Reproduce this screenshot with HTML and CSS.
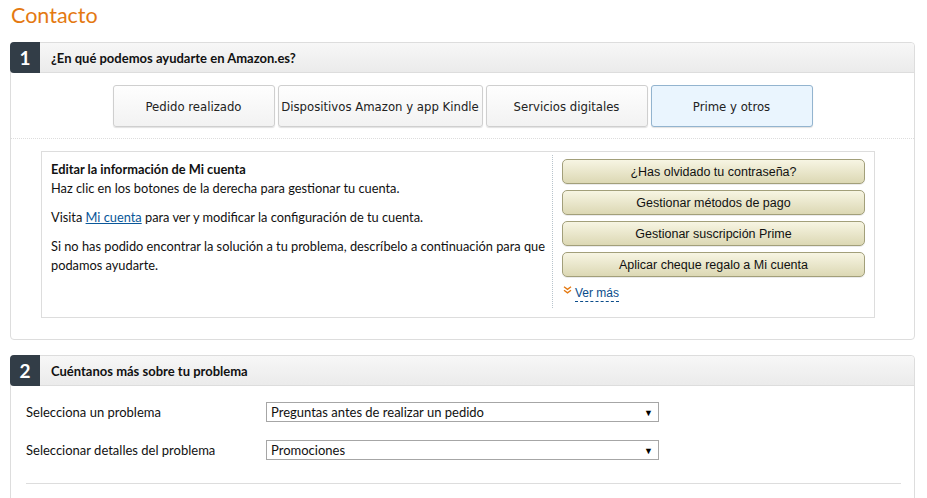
FILE: index.html
```html
<!DOCTYPE html>
<html>
  <head>
    <meta charset="utf-8">
    <title>Contacto</title>
    <link rel="stylesheet" href="styles.css">
  </head>
  <body>
    <h1 class="page-title">Contacto</h1>

    <section class="step">
        <div class="step-head">
            <span class="step-num">1</span>
            <h2>¿En qué podemos ayudarte en Amazon.es?</h2>
        </div>
        <div class="tabs">
            <button class="tab">Pedido realizado</button>
            <button class="tab wide">Dispositivos Amazon y app Kindle</button>
            <button class="tab">Servicios digitales</button>
            <button class="tab selected">Prime y otros</button>
        </div>
        <div class="panel">
            <div class="panel-info">
                <p><b>Editar la información de Mi cuenta</b><br>
                Haz clic en los botones de la derecha para gestionar tu cuenta.</p>
                <p>Visita <a href="#">Mi cuenta</a> para ver y modificar la configuración de tu cuenta.</p>
                <p>Si no has podido encontrar la solución a tu problema, descríbelo a continuación para que podamos ayudarte.</p>
            </div>
            <div class="panel-actions">
                <button class="olive">¿Has olvidado tu contraseña?</button>
                <button class="olive">Gestionar métodos de pago</button>
                <button class="olive">Gestionar suscripción Prime</button>
                <button class="olive">Aplicar cheque regalo a Mi cuenta</button>
                <div class="more">
                    <svg width="9" height="8" viewBox="0 0 9 8">
                        <polyline points="1,0.8 4.5,3.3 8,0.8" fill="none" stroke="#e47911" stroke-width="1.4"/>
                        <polyline points="1,4.3 4.5,6.8 8,4.3" fill="none" stroke="#e47911" stroke-width="1.4"/>
                    </svg>
                    <a href="#">Ver más</a>
                </div>
            </div>
        </div>
    </section>

    <section class="step">
        <div class="step-head">
            <span class="step-num">2</span>
            <h2>Cuéntanos más sobre tu problema</h2>
        </div>
        <div class="form">
            <div class="form-row">
                <label>Selecciona un problema</label>
                <div class="select"><span>Preguntas antes de realizar un pedido</span><span class="arrow">▼</span></div>
            </div>
            <div class="form-row">
                <label>Seleccionar detalles del problema</label>
                <div class="select"><span>Promociones</span><span class="arrow">▼</span></div>
            </div>
            <hr>
        </div>
    </section>
  </body>
</html>
```

FILE: styles.css
```css
body {
    margin: 0;
    padding: 0 12px 0 10px;
    font-family: Lato, "Liberation Sans", sans-serif;
    font-size: 13px;
    color: #111;
    background: #fff;
}
.page-title {
    margin: 0 0 0 1px;
    font-size: 21.5px;
    font-weight: normal;
    line-height: 30px;
    color: #e47911;
}
.step {
    margin-top: 12px;
    border: 1px solid #ddd;
    border-radius: 4px;
}
.step + .step {
    margin-top: 15px;
}
.step-head {
    display: flex;
    align-items: center;
    height: 29px;
    border-bottom: 1px solid #ddd;
    background: linear-gradient(#f7f7f7, #ebebeb);
    border-radius: 4px 4px 0 0;
}
.step-num {
    width: 30px;
    height: 31px;
    margin: -1px 0 -1px -1px;
    display: flex;
    align-items: center;
    justify-content: center;
    background: #323d47;
    color: #fff;
    font-size: 19px;
    font-weight: bold;
    border-radius: 4px 0 0 4px;
}
.step-head h2 {
    margin: 0 0 0 11px;
    font-size: 13px;
    font-weight: bold;
    color: #111;
}
.tabs {
    display: flex;
    justify-content: center;
    gap: 3px;
    padding: 12px 0 11px;
    border-bottom: 1px dotted #ddd;
}
.tab {
    width: 162px;
    height: 42px;
    padding: 0;
    border: 1px solid #cfcfcf;
    border-radius: 3px;
    background: linear-gradient(#fefefe, #f2f2f2);
    box-shadow: 0 1px 1px rgba(0, 0, 0, 0.12);
    font-family: "DejaVu Sans Condensed", "DejaVu Sans", sans-serif;
    font-size: 13px;
    color: #222;
}
.tab.wide {
    width: 205px;
}
.tab.selected {
    background: #eaf5fe;
    border-color: #93b4cf;
}
.panel {
    display: flex;
    min-height: 165px;
    margin: 12px 39px 21px 30px;
    border: 1px solid #ddd;
}
.panel-info {
    width: 502px;
    padding: 8px 0 0 9px;
    font-size: 12.8px;
    line-height: 19px;
}
.panel-info p {
    margin: 0 0 10px;
}
.panel-info a {
    color: #0a5799;
}
.panel-actions {
    display: flex;
    flex-direction: column;
    gap: 6px;
    margin: 3px 0 9px;
    padding: 4px 9px 0;
    border-left: 1px dotted #b8c4cc;
}
.olive {
    width: 303px;
    height: 25px;
    padding: 0;
    border: 1px solid #a29f7a;
    border-radius: 5px;
    background: linear-gradient(#f7f5e3, #dcd8b4);
    box-shadow: 0 1px 0 rgba(0, 0, 0, 0.08);
    font-family: "Liberation Sans", Arial, sans-serif;
    font-size: 12.5px;
    color: #111;
}
.more {
    display: flex;
    align-items: flex-start;
    gap: 3px;
    line-height: 19px;
    padding-left: 1px;
}
.more svg {
    margin-top: 3px;
}
.more a {
    font-family: "Liberation Sans", Arial, sans-serif;
    font-size: 12px;
    color: #0a4c8a;
    text-decoration: none;
    border-bottom: 1px dashed #0a4c8a;
    line-height: 15px;
    margin-top: 3px;
}
.form {
    padding: 16px 13px 40px 15px;
}
.form-row {
    display: flex;
    align-items: center;
    margin-bottom: 18px;
}
.form-row label {
    width: 240px;
}
.select {
    width: 382px;
    height: 18px;
    display: flex;
    align-items: center;
    justify-content: space-between;
    padding: 0 5px 0 4px;
    border: 1px solid #a6a6a6;
    background: #fff;
}
.select .arrow {
    font-size: 9px;
    color: #000;
}
.form hr {
    margin: 23px 0 0;
    border: 0;
    border-top: 1px solid #ddd;
}
```
